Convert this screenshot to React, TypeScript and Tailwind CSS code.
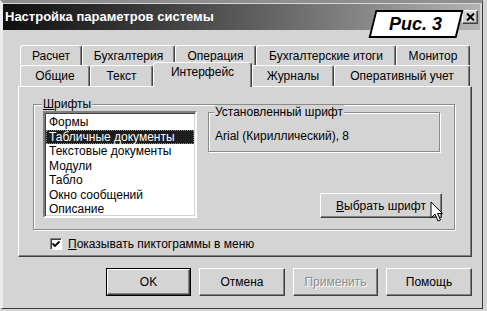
const raised =
  "border-t border-l border-t-white border-l-white border-r border-b border-r-[#404040] border-b-[#404040] shadow-[inset_-1px_-1px_#808080]";
const etched =
  "border border-[#8a8a8a] shadow-[inset_1px_1px_#ffffff,1px_1px_#ffffff]";

function Tab({ label, w, selected }: { label: string; w: string; selected?: boolean }) {
  if (selected) {
    return (
      <div
        className={`relative z-10 ${w} h-[25px] -mb-px flex justify-center pt-[2px] bg-[#d4d4d4] rounded-t-[3px] border-t border-l border-t-white border-l-white border-r border-r-[#404040] shadow-[inset_-1px_0_#808080]`}
      >
        {label}
      </div>
    );
  }
  return (
    <div
      className={`${w} h-full flex items-center justify-center rounded-t-[3px] border-t border-l border-t-white border-l-white border-r border-r-[#404040] shadow-[inset_-1px_0_#808080]`}
    >
      {label}
    </div>
  );
}

function Button({
  children,
  w,
  isDefault,
  disabled,
}: {
  children: React.ReactNode;
  w: string;
  isDefault?: boolean;
  disabled?: boolean;
}) {
  return (
    <div className={`${w} h-full ${isDefault ? "border border-black" : ""}`}>
      <div
        className={`w-full h-full flex items-center justify-center ${raised} ${
          disabled ? "text-[#8c8c8c] [text-shadow:1px_1px_#ffffff]" : ""
        }`}
      >
        {children}
      </div>
    </div>
  );
}

const fonts = [
  "Формы",
  "Табличные документы",
  "Текстовые документы",
  "Модули",
  "Табло",
  "Окно сообщений",
  "Описание",
];

export default function App() {
  return (
    <div className="w-[487px] h-[311px] bg-[#d4d4d4] overflow-hidden font-['Liberation_Sans',Arial,sans-serif] text-[12px] leading-[14px] text-black">
      <div className="relative w-[483px] h-[309px] border-t-[3px] border-t-[#8f8f8f] border-l-[3px] border-l-[#ececec] border-r border-r-[#3a3a3a] border-b border-b-[#3a3a3a]">
        {/* title bar */}
        <div className="mt-px mr-[2px] h-[26px] flex items-center pl-[2px] bg-linear-to-r from-[#101010] via-[#5a5a5a] to-[#b4b4b4]">
          <span className="text-white font-bold text-[13px]">Настройка параметров системы</span>
          <div className={`ml-auto mr-[2px] w-[16px] h-[14px] bg-[#d4d4d4] flex items-center justify-center ${raised}`}>
            <svg width="9" height="8" viewBox="0 0 9 8">
              <path d="M1 0.5 L8 7.5 M8 0.5 L1 7.5" stroke="black" strokeWidth="2" />
            </svg>
          </div>
        </div>

        {/* Рис. 3 badge */}
        <div className="absolute left-[369px] top-[7px] w-[88px] h-[28px] -skew-x-[14deg] bg-white border-2 border-black flex items-center justify-center">
          <span className="skew-x-[14deg] italic font-bold text-[18px]">Рис. 3</span>
        </div>

        {/* tabs */}
        <div className="mt-[15px] ml-[17px]">
          <div className="flex h-[20px]">
            <Tab label="Расчет" w="w-[62px]" />
            <Tab label="Бухгалтерия" w="w-[93px]" />
            <Tab label="Операция" w="w-[81px]" />
            <Tab label="Бухгалтерские итоги" w="w-[140px]" />
            <Tab label="Монитор" w="w-[74px]" />
          </div>
          <div className="flex h-[21px] items-end">
            <Tab label="Общие" w="w-[70px]" />
            <Tab label="Текст" w="w-[63px]" />
            <Tab label="Интерфейс" w="w-[99px]" selected />
            <Tab label="Журналы" w="w-[82px]" />
            <Tab label="Оперативный учет" w="w-[136px]" />
          </div>
        </div>

        {/* panel */}
        <div className={`ml-[15px] w-[454px] h-[171px] ${raised}`}>
          <div className={`ml-[14px] mt-[17px] w-[422px] h-[126px] ${etched}`}>
            <span className="block w-fit -mt-[8px] ml-[8px] px-px bg-[#d4d4d4]">
              <u>Ш</u>рифты
            </span>
            <div className="flex">
              <div className="ml-[9px] w-[154px] h-[107px] bg-white border-2 border-t-[#808080] border-l-[#808080] border-r-white border-b-white shadow-[inset_1px_1px_#404040,inset_-1px_-1px_#d4d4d4] pt-[2px] px-px">
                {fonts.map((f, i) => (
                  <div
                    key={f}
                    className={`h-[14.5px] leading-[14.5px] pl-[3px] ${
                      i === 1 ? "bg-[#1c1c1c] text-white outline-1 outline-dotted outline-[#888] -outline-offset-1" : ""
                    }`}
                  >
                    {f}
                  </div>
                ))}
              </div>
              <div className="ml-[11px] w-[234px] flex flex-col">
                <div className={`mt-px w-[232px] h-[40px] ${etched}`}>
                  <span className="block w-fit -mt-[8px] ml-[5px] px-px bg-[#d4d4d4]">Установленный шрифт</span>
                  <div className="mt-[10px] pl-[6px]">Arial (Кириллический), 8</div>
                </div>
                <div className="relative mt-[41px] ml-auto w-[122px] h-[25px]">
                  <Button w="w-full">
                    <span>
                      <u>В</u>ыбрать шрифт
                    </span>
                  </Button>
                  <svg
                    className="absolute left-[110px] top-[8px]"
                    width="14"
                    height="22"
                    viewBox="0 0 14 22"
                  >
                    <path
                      d="M1 1 L1 17 L5 13 L8 20 L10.5 19 L7.5 12.5 L12.5 12.5 Z"
                      fill="white"
                      stroke="black"
                      strokeWidth="1"
                      strokeLinejoin="miter"
                    />
                  </svg>
                </div>
              </div>
            </div>
          </div>
          <div className="flex items-center ml-[31px] mt-[7px]">
            <div className="w-[12px] h-[12px] bg-white border border-t-[#808080] border-l-[#808080] border-r-white border-b-white shadow-[inset_1px_1px_#404040] flex items-center justify-center">
              <svg width="8" height="8" viewBox="0 0 8 8">
                <path d="M0.5 3.5 L3 6 L7.5 1.5" fill="none" stroke="black" strokeWidth="1.8" />
              </svg>
            </div>
            <span className="ml-[6px]">
              <u>П</u>оказывать пиктограммы в меню
            </span>
          </div>
        </div>

        {/* buttons */}
        <div className="mt-[11px] h-[28px] flex justify-end gap-[8px] pr-[10px]">
          <Button w="w-[85px]" isDefault>
            OK
          </Button>
          <Button w="w-[86px]">Отмена</Button>
          <Button w="w-[85px]" disabled>
            Применить
          </Button>
          <Button w="w-[86px]">Помощь</Button>
        </div>
      </div>
    </div>
  );
}
